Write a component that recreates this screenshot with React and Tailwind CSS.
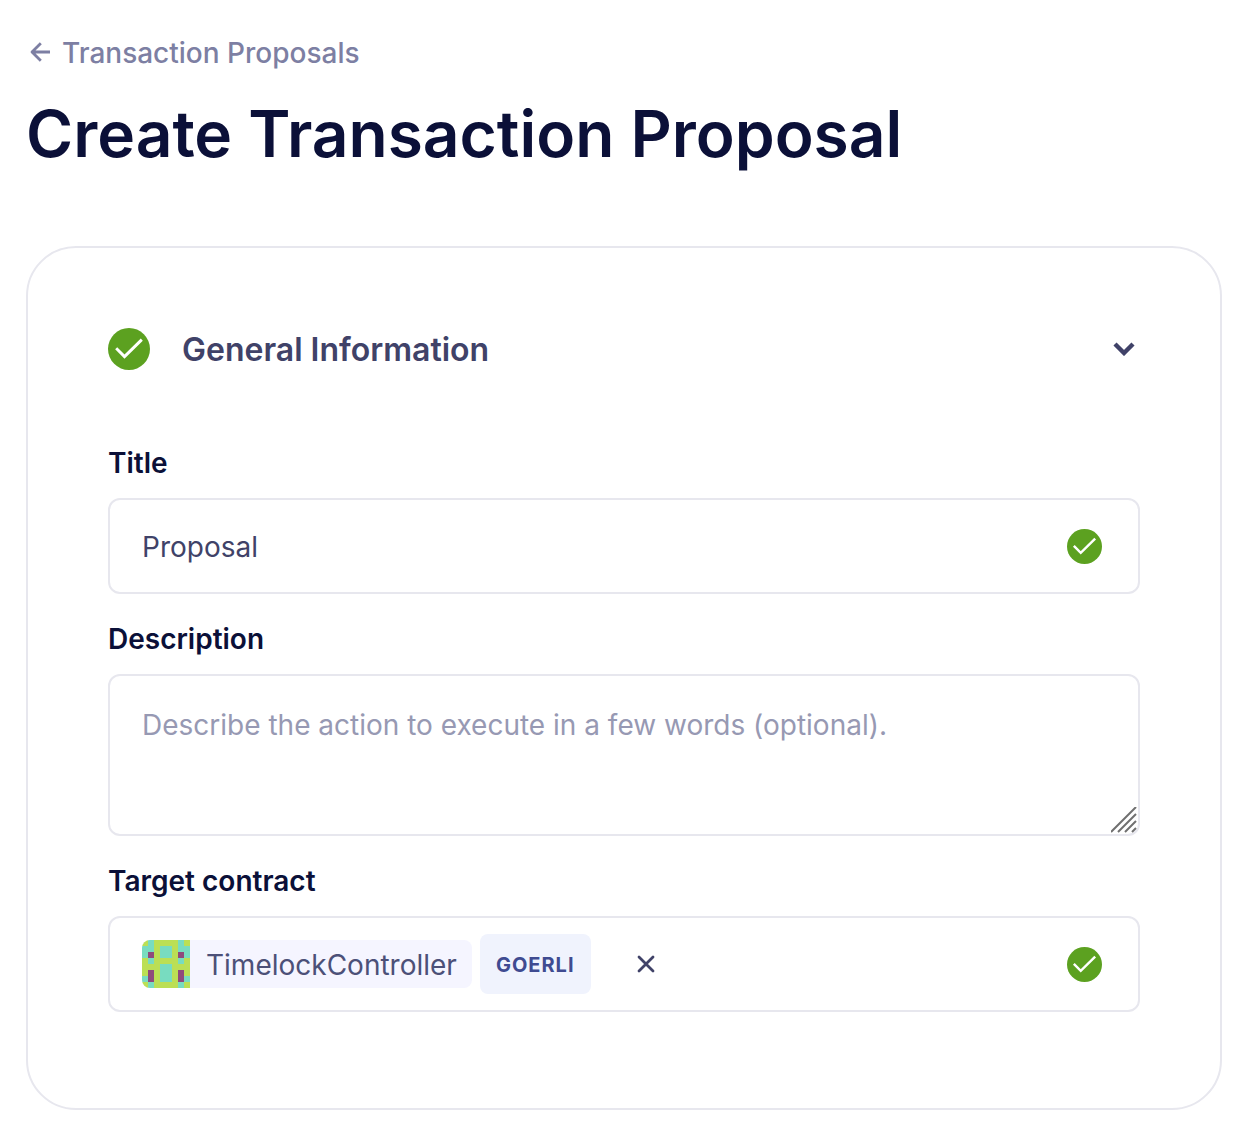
import React from "react";

const IDENTICON = [
  "01000010",
  "11011011",
  "12011021",
  "01000010",
  "00011000",
  "02011020",
  "12011021",
  "01000010",
];
const IDENTICON_COLORS = ["#bbdf55", "#78dcc0", "#8f4a7c"];

function Identicon() {
  return (
    <svg viewBox="0 0 8 8" className="size-12 shrink-0" shapeRendering="crispEdges" aria-hidden="true">
      {IDENTICON.flatMap((row, y) =>
        [...row].map((c, x) => (
          <rect key={`${x}-${y}`} x={x} y={y} width="1" height="1" fill={IDENTICON_COLORS[Number(c)]} />
        ))
      )}
    </svg>
  );
}

function CheckBadge({ className }) {
  return (
    <svg viewBox="0 0 42 42" className={className} aria-hidden="true">
      <circle cx="21" cy="21" r="21" fill="#5ca120" />
      <path d="M8.2 20.2 16.5 28.6 33.8 11.6" fill="none" stroke="#fff" strokeWidth="2.9" />
    </svg>
  );
}

const label = "text-[28px] leading-8 font-semibold text-[#0b1038]";
const box = "w-full rounded-xl border-2 border-[#e7e7ee] bg-white";

export default function App() {
  return (
    <main className="bg-white px-[26px] pt-[37px] pb-[22px] font-['Inter',sans-serif] text-[#404268]">
      <a href="#proposals" className="flex w-fit items-center gap-3 pl-1 text-[28px] leading-8 font-medium text-[#7d7fa3]">
        <svg viewBox="0 0 20 22" className="h-[22px] w-5" fill="none" stroke="currentColor" strokeWidth="2.8" strokeLinejoin="round" aria-hidden="true">
          <path d="M20 10H2M10.8 1.2 2 10l8.8 8.8" />
        </svg>
        Transaction Proposals
      </a>
      <h1 className="mt-[25px] text-[64px] leading-20 font-semibold text-[#0b1038]">Create Transaction Proposal</h1>

      <section className="mt-[72px] rounded-[50px] border-2 border-[#e7e7ee] px-20 pt-20 pb-24">
        <button type="button" className="flex w-full items-center text-left">
          <CheckBadge className="size-[42px]" />
          <span className="ml-8 grow pt-0.5 text-[32px] leading-10 font-semibold">General Information</span>
          <svg viewBox="0 0 22 14" className="mr-[5px] h-[14px] w-[22px]" fill="none" stroke="currentColor" strokeWidth="4.4" aria-hidden="true">
            <path d="M2 2l9 9 9-9" />
          </svg>
        </button>

        <form className="mt-[77px] flex flex-col">
          <label htmlFor="title" className={label}>Title</label>
          <div className={`${box} mt-[19px] flex h-24 items-center pr-9 pl-8`}>
            <input id="title" type="text" defaultValue="Proposal" className="min-w-0 grow pt-0.5 text-[28px] leading-8 outline-none" />
            <CheckBadge className="size-[35px]" />
          </div>

          <label htmlFor="description" className={`${label} mt-[29px]`}>Description</label>
          <div className="relative mt-[19px] flex">
            <textarea
              id="description"
              placeholder="Describe the action to execute in a few words (optional)."
              className={`${box} h-[162px] resize-none px-8 py-8 text-[28px] leading-[34px] outline-none placeholder:text-[#9799b3]`}
            />
            <svg viewBox="0 0 26 26" className="pointer-events-none absolute right-[3px] bottom-[3px] size-[26px]" fill="none" stroke="#707070" strokeWidth="2" aria-hidden="true">
              <path d="M0 25 25 0M7 25 25 7M14 25l11-11M21 25l4-4" />
            </svg>
          </div>

          <label htmlFor="clear" className={`${label} mt-[29px]`}>Target contract</label>
          <div className={`${box} mt-[19px] flex h-24 items-center pr-9 pl-8`}>
            <div className="flex h-12 items-center overflow-hidden rounded-lg bg-[#f5f5ff] pr-[15px]">
              <Identicon />
              <span className="ml-4 pt-0.5 text-[28px] leading-8 text-[#4c5078]">TimelockController</span>
            </div>
            <span className="ml-2 flex h-[60px] items-center rounded-lg bg-[#f0f3fd] px-4 pt-0.5 text-xl font-bold tracking-wider text-[#3f4b91]">GOERLI</span>
            <button id="clear" type="button" aria-label="Clear target contract" className="ml-[46px]">
              <svg viewBox="0 0 18 18" className="size-[18px]" fill="none" stroke="currentColor" strokeWidth="2.8" strokeLinecap="round" aria-hidden="true">
                <path d="M2 2l14 14M16 2 2 16" />
              </svg>
            </button>
            <CheckBadge className="ml-auto size-[35px]" />
          </div>
        </form>
      </section>
    </main>
  );
}
